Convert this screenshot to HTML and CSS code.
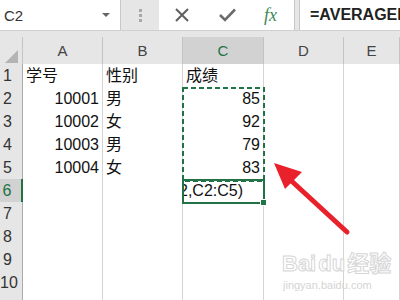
FILE: index.html
```html
<!DOCTYPE html>
<html lang="zh-CN">
<head>
  <meta charset="UTF-8" />
  <title>AVERAGEIF</title>
  <link rel="stylesheet" href="styles.css">
</head>
<body>
  <div class="formula-bar">
    <div class="name-box">
      <span>C2</span>
      <span class="drop"></span>
    </div>
    <div class="grip"><i></i><i></i><i></i></div>
    <div class="fx-box">
      <svg class="ico" width="16" height="16" viewBox="0 0 16 16"><path d="M2 2L14 14M14 2L2 14" stroke="#5f5f5f" stroke-width="2" fill="none"/></svg>
      <svg class="ico" width="17" height="14" viewBox="0 0 17 14"><path d="M1 7L6 12L16 1.5" stroke="#6b6b6b" stroke-width="2.6" fill="none"/></svg>
      <span class="fx">fx</span>
    </div>
    <div class="formula">=AVERAGEI</div>
  </div>

  <div class="sheet">
    <div class="row head">
      <div class="corner"><span></span></div>
      <div class="col">A</div>
      <div class="col">B</div>
      <div class="col sel">C</div>
      <div class="col">D</div>
      <div class="col">E</div>
    </div>
    <div class="row"><div class="num">1</div><div class="cell">学号</div><div class="cell">性别</div><div class="cell">成绩</div><div class="cell"></div><div class="cell"></div></div>
    <div class="row"><div class="num">2</div><div class="cell r">10001</div><div class="cell">男</div><div class="cell r">85</div><div class="cell"></div><div class="cell"></div></div>
    <div class="row"><div class="num">3</div><div class="cell r">10002</div><div class="cell">女</div><div class="cell r">92</div><div class="cell"></div><div class="cell"></div></div>
    <div class="row"><div class="num">4</div><div class="cell r">10003</div><div class="cell">男</div><div class="cell r">79</div><div class="cell"></div><div class="cell"></div></div>
    <div class="row"><div class="num">5</div><div class="cell r">10004</div><div class="cell">女</div><div class="cell r">83</div><div class="cell"></div><div class="cell"></div></div>
    <div class="row"><div class="num sel">6</div><div class="cell"></div><div class="cell"></div><div class="cell edit">2,C2:C5)</div><div class="cell"></div><div class="cell"></div></div>
    <div class="row"><div class="num">7</div><div class="cell"></div><div class="cell"></div><div class="cell"></div><div class="cell"></div><div class="cell"></div></div>
    <div class="row"><div class="num">8</div><div class="cell"></div><div class="cell"></div><div class="cell"></div><div class="cell"></div><div class="cell"></div></div>
    <div class="row"><div class="num">9</div><div class="cell"></div><div class="cell"></div><div class="cell"></div><div class="cell"></div><div class="cell"></div></div>
    <div class="row"><div class="num">10</div><div class="cell"></div><div class="cell"></div><div class="cell"></div><div class="cell"></div><div class="cell"></div></div>
    <div class="row tail"><div class="num"></div><div class="cell"></div><div class="cell"></div><div class="cell"></div><div class="cell"></div><div class="cell"></div></div>

    <!-- copy range C2:C5 -->
    <svg class="ants" width="84" height="96" viewBox="0 0 84 96">
      <rect x="1" y="1" width="81" height="93" fill="none" stroke="#217346" stroke-width="2" stroke-dasharray="5 3"/>
    </svg>
    <div class="active"><span class="handle"></span></div>

    <div class="mark">
      <div class="mark-logo">Bai<span class="paw">du</span>经验</div>
      <div class="mark-url">jingyan.baidu.com</div>
    </div>

    <svg class="arrow" width="400" height="263" viewBox="0 37 400 263">
      <line x1="347" y1="232" x2="285" y2="175" stroke="#e8212b" stroke-width="5" stroke-linecap="round"/>
      <polygon points="274,163 302,172 285,189" fill="#e8212b"/>
    </svg>
  </div>
</body>
</html>
```

FILE: styles.css
```css
body {
  margin: 0;
  width: 400px;
  height: 300px;
  overflow: hidden;
  background: #e6e6e6;
  font-family: "Liberation Sans", "Noto Sans CJK SC", sans-serif;
  color: #222;
}

/* formula bar */
.formula-bar {
  display: flex;
  height: 30px;
  border-bottom: 1px solid #d0d0d0;
}

.name-box {
  width: 121px;
  background: #fff;
  border-right: 1px solid #c8c8c8;
  display: flex;
  align-items: center;
  justify-content: space-between;
  padding: 0 10px 0 4px;
  box-sizing: border-box;
  font-size: 15px;
  color: #333;
}

.drop {
  width: 0;
  height: 0;
  border-left: 4px solid transparent;
  border-right: 4px solid transparent;
  border-top: 4px solid #666;
}

.grip {
  width: 38px;
  display: flex;
  flex-direction: column;
  align-items: center;
  justify-content: center;
  gap: 2px;
}

.grip i {
  width: 3px;
  height: 3px;
  background: #a8a8a8;
}

.fx-box {
  width: 136px;
  background: #fff;
  border-right: 1px solid #c8c8c8;
  display: flex;
  align-items: center;
  padding-left: 15px;
  gap: 29px;
  box-sizing: border-box;
}

.fx {
  font-family: "Liberation Serif", serif;
  font-style: italic;
  font-size: 18px;
  color: #3b8a55;
  margin-left: -1px;
}

.formula {
  flex: 1;
  margin-left: 4px;
  background: #fff;
  border-left: 1px solid #c8c8c8;
  padding: 0 0 0 10px;
  font-size: 16px;
  font-weight: bold;
  line-height: 30px;
  white-space: nowrap;
  overflow: hidden;
  color: #222;
}

/* sheet */
.sheet {
  position: relative;
  margin-top: 6px;
}

.row {
  display: grid;
  grid-template-columns: 23px 80px 80px 81px 80px 56px;
  height: 23px;
}

.row.head {
  height: 27px;
}

.row.tail {
  height: 10px;
}

.corner,
.col {
  background: #e6e6e6;
  border-right: 1px solid #c4c4c4;
  border-bottom: 1px solid #ababab;
  box-sizing: border-box;
}

.corner {
  display: flex;
  align-items: flex-end;
  justify-content: flex-end;
  padding: 0 4px 3px 0;
}

.corner span {
  width: 0;
  height: 0;
  border-left: 13px solid transparent;
  border-bottom: 13px solid #b4b4b4;
}

.col {
  text-align: center;
  font-size: 15px;
  line-height: 28px;
  color: #444;
}

.col.sel {
  background: #d2d2d2;
  color: #217346;
  border-bottom: 2px solid #217346;
}

.num {
  background: #e6e6e6;
  border-right: 1px solid #ababab;
  border-bottom: 1px solid #c4c4c4;
  box-sizing: border-box;
  padding-right: 7px;
  text-align: center;
  font-size: 16px;
  line-height: 23px;
  color: #333;
}

.num.sel {
  background: #d2d2d2;
  color: #217346;
  border-right: 2px solid #217346;
}

.cell {
  background: #fff;
  border-right: 1px solid #d4d4d4;
  border-bottom: 1px solid #d4d4d4;
  box-sizing: border-box;
  padding: 0 3px;
  font-size: 16px;
  line-height: 23px;
  white-space: nowrap;
  overflow: hidden;
  color: #111;
}

.cell.r {
  text-align: right;
}

.cell.edit {
  padding: 0;
  text-indent: -4px;
}

/* overlays */
.ants {
  position: absolute;
  left: 182px;
  top: 50px;
}

.active {
  position: absolute;
  left: 182px;
  top: 142px;
  width: 83px;
  height: 25px;
  border: 2px solid #217346;
  box-sizing: border-box;
}

.handle {
  position: absolute;
  right: -4px;
  bottom: -4px;
  width: 5px;
  height: 5px;
  background: #217346;
  border: 1px solid #fff;
}

.arrow {
  position: absolute;
  left: 0;
  top: 0;
}

.mark {
  position: absolute;
  left: 282px;
  top: 212px;
  white-space: nowrap;
  color: #fff;
  -webkit-text-stroke: 1px #d6d6d6;
}

.mark-logo {
  font-size: 22px;
  font-weight: bold;
  line-height: 30px;
}

.paw {
  margin: 0 2px;
}

.mark-url {
  font-size: 11px;
  line-height: 13px;
  -webkit-text-stroke: 0;
  color: #d4d4d4;
  margin-left: 1px;
}
```
